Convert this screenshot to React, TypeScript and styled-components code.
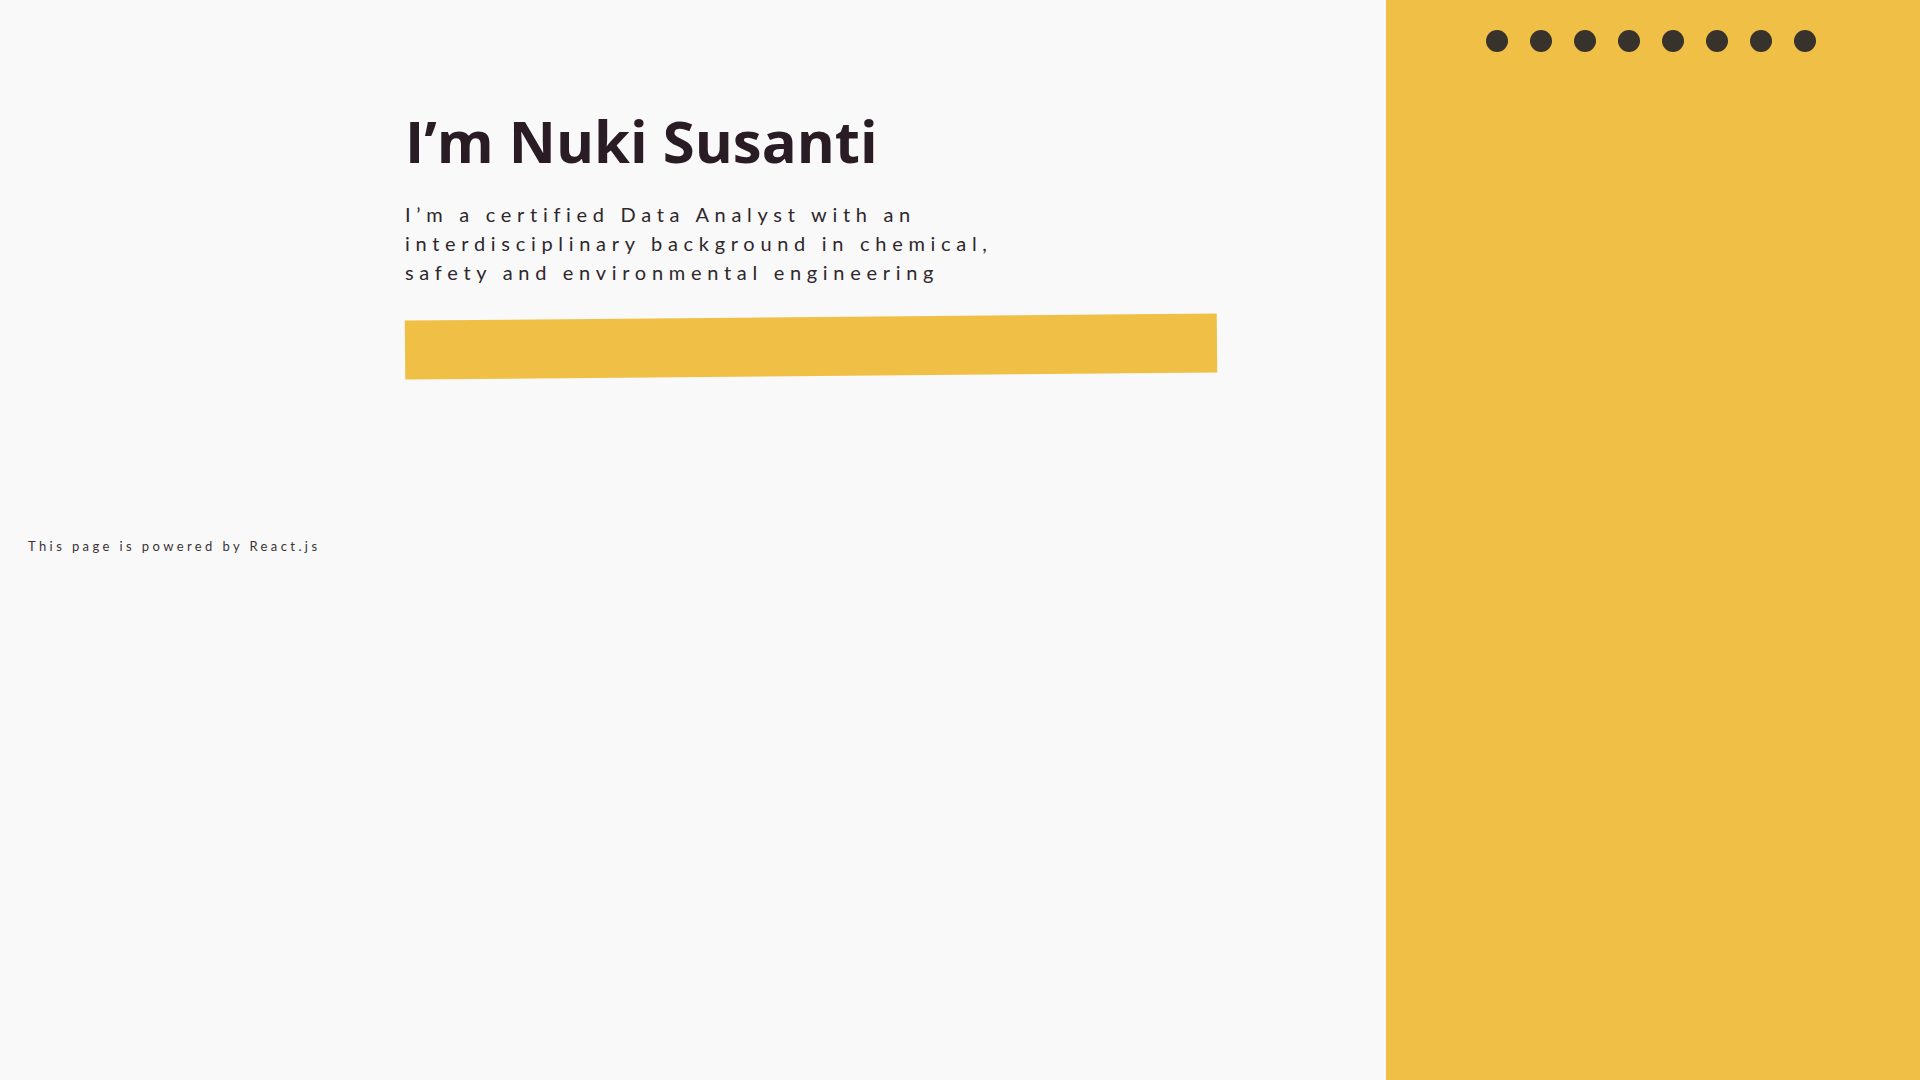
import styled, { createGlobalStyle } from 'styled-components'

const GlobalStyle = createGlobalStyle`
  html, body {
    margin: 0;
    padding: 0;
    background: #f9f9f9;
  }
  * {
    box-sizing: border-box;
  }
`

const Page = styled.div`
  display: grid;
  grid-template-columns: 1386px 1fr;
  min-height: 100vh;
`

const Main = styled.main`
  display: flex;
  flex-direction: column;
  padding-top: 106px;
`

const Intro = styled.section`
  margin-left: 405px;
  width: 812px;
`

const Title = styled.h1`
  margin: 0;
  font-family: 'Open Sans', sans-serif;
  font-weight: 700;
  font-size: 58px;
  line-height: 1.2;
  color: #2a1c24;
`

const Lead = styled.p`
  margin: 24px 0 0;
  font-family: Lato, 'Liberation Sans', sans-serif;
  font-weight: 400;
  font-size: 20px;
  line-height: 29px;
  letter-spacing: 5.7px;
  color: #2e272c;
  max-width: 620px;
`

const Marker = styled.div`
  margin-top: 30px;
  height: 59px;
  background: #f0c046;
  transform: rotate(-0.5deg);
`

const Footer = styled.footer`
  margin: 162px 0 0 28px;
  font-family: Lato, 'Liberation Sans', sans-serif;
  font-size: 13px;
  letter-spacing: 3.4px;
  color: #3a3236;
`

const Side = styled.aside`
  background: #f0c046;
  display: flex;
  justify-content: center;
  align-items: flex-start;
  padding: 30px 4px 0 0;
`

const Dots = styled.nav`
  display: flex;
  gap: 22px;
`

const Dot = styled.span`
  width: 22px;
  height: 22px;
  border-radius: 50%;
  background: #38322d;
`

export function App() {
  return (
    <Page>
      <GlobalStyle />
      <Main>
        <Intro>
          <Title>I’m Nuki Susanti</Title>
          <Lead>
            I’m a certified Data Analyst with an interdisciplinary background in chemical, safety and environmental
            engineering
          </Lead>
          <Marker />
        </Intro>
        <Footer>This page is powered by React.js</Footer>
      </Main>
      <Side>
        <Dots>
          {Array.from({ length: 8 }).map((_, i) => (
            <Dot key={i} />
          ))}
        </Dots>
      </Side>
    </Page>
  )
}

export default App
